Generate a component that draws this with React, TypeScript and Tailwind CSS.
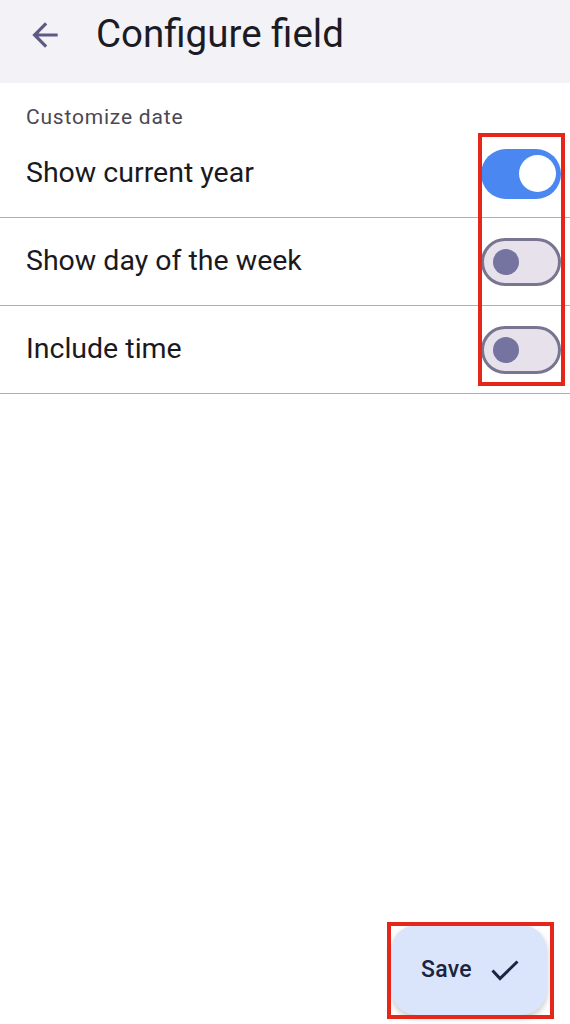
interface ToggleProps {
  on: boolean;
}

const Toggle = ({ on }: ToggleProps) => {
  if (on) {
    return (
      <div className="w-[80px] h-[50px] rounded-full bg-[#4b87f1] flex items-center justify-end pr-[5px]">
        <div className="w-[37px] h-[37px] rounded-full bg-white"></div>
      </div>
    );
  }
  return (
    <div className="w-[80px] h-[48px] rounded-full bg-[#e6e1ea] border-[3px] border-[#797591] flex items-center pl-[9px]">
      <div className="w-[26px] h-[26px] rounded-full bg-[#75739f]"></div>
    </div>
  );
};

const options = [
  { label: 'Show current year', on: true },
  { label: 'Show day of the week', on: false },
  { label: 'Include time', on: false },
];

export default function App() {
  return (
    <div className="relative h-[1024px] w-full bg-white flex flex-col overflow-hidden" style={{ fontFamily: 'Roboto, sans-serif' }}>
      {/* Top app bar */}
      <div className="h-[83px] bg-[#f3f2f7] flex items-center pb-[14px]">
        <svg viewBox="0 0 24 24" className="ml-[26px] w-[38px] h-[38px] fill-[#5d5a86]">
          <path d="M20 11H7.83l5.59-5.59L12 4l-8 8 8 8 1.41-1.41L7.83 13H20v-2z" />
        </svg>
        <h1 className="ml-[32px] text-[38.5px] leading-none text-[#1c1b24]">Configure field</h1>
      </div>

      <p className="pt-[21px] pl-[26px] text-[21px] leading-[26px] tracking-[0.8px] text-[#4b4852]">Customize date</p>

      <div className="flex flex-col">
        {options.map((opt, i) => (
          <div
            key={i}
            className="h-[88px] flex items-center justify-between pl-[26px] pr-[9px] border-b border-[#aeabbb]"
          >
            <span className="text-[28.5px] text-[#1a1a1e]">{opt.label}</span>
            <Toggle on={opt.on} />
          </div>
        ))}
      </div>

      <div className="flex-1"></div>

      {/* Save FAB */}
      <div className="flex justify-end pr-[23px] pb-[9px]">
        <button className="w-[156px] h-[90px] rounded-[26px] bg-[#dae5fb] shadow-[0_3px_6px_rgba(0,0,0,0.22)] flex items-center justify-center gap-[19px] pl-[2px] text-[#1b2440]">
          <span className="text-[23px] font-medium tracking-[0.3px]">Save</span>
          <svg viewBox="0 0 28 22" className="w-[28px] h-[22px] mt-[1px]" fill="none" stroke="currentColor" strokeWidth={3}>
            <polyline points="1.5,10.5 9,18.5 26.5,1.5" />
          </svg>
        </button>
      </div>

      {/* Red annotation boxes */}
      <div className="absolute left-[478px] top-[133px] w-[87px] h-[253px] border-[4px] border-[#e4261b]"></div>
      <div className="absolute left-[387px] top-[922px] w-[167px] h-[97px] border-[4px] border-[#e4261b]"></div>
    </div>
  );
}
